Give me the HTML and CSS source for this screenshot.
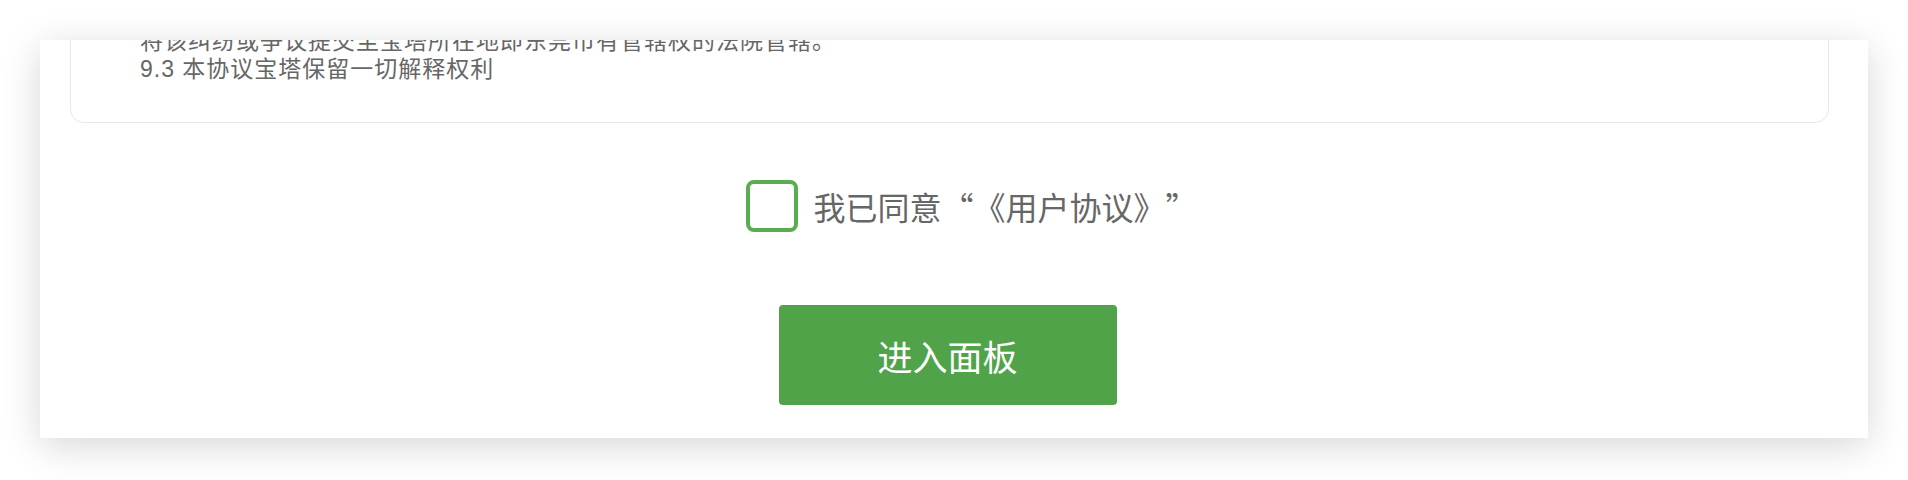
FILE: index.html
```html
<!DOCTYPE html>
<html lang="zh-CN">
<head>
<meta charset="utf-8">
<title>用户协议</title>
<link rel="stylesheet" href="styles.css">
</head>
<body>
<div class="panel">
  <div class="agreement">
    <p class="line">将该纠纷或争议提交至宝塔所在地即东莞市有管辖权的法院管辖。</p>
    <p class="line">9.3 本协议宝塔保留一切解释权利</p>
  </div>
  <label class="agree">
    <span class="check"></span>
    <span class="agree-text">我已同意<span class="q q-open">“</span>《用户协议》<span class="q q-close">”</span></span>
  </label>
  <div class="actions">
    <button class="enter-btn" type="button">进入面板</button>
  </div>
</div>
</body>
</html>
```

FILE: styles.css
```css
html, body {
  margin: 0;
  padding: 0;
  background: #ffffff;
}
body {
  font-family: "Liberation Sans", "Noto Sans CJK SC", sans-serif;
  padding: 40px;
  height: 480px;
  box-sizing: border-box;
}
.panel {
  height: 398px;
  background: #ffffff;
  box-shadow: 0 8px 36px rgba(0, 0, 0, 0.16);
  overflow: hidden;
  padding: 0 39px 0 30px;
  display: flex;
  flex-direction: column;
  align-items: center;
}
.agreement {
  align-self: stretch;
  margin-top: -34px;
  padding: 20px 40px 39px 69px;
  border: 1px solid #e8e8e8;
  border-radius: 14px;
  color: #666666;
  font-size: 23px;
  letter-spacing: 1px;
  line-height: 28px;
}
.line {
  margin: 0;
  white-space: nowrap;
}
.agree {
  margin-top: 57px;
  margin-left: 45px;
  display: flex;
  align-items: center;
  gap: 15px;
  cursor: pointer;
}
.check {
  width: 52px;
  height: 52px;
  box-sizing: border-box;
  border: 4px solid #58ad50;
  border-radius: 8px;
  background: #ffffff;
}
.agree-text {
  font-size: 32px;
  line-height: 40px;
  color: #666666;
  font-family: "Noto Sans CJK SC", sans-serif;
  white-space: nowrap;
}
.q {
  display: inline-block;
  width: 1em;
}
.q-open {
  text-align: left;
}
.q-close {
  text-align: right;
}
.actions {
  margin-top: 73px;
  margin-right: 4px;
}
.enter-btn {
  width: 338px;
  height: 100px;
  border: 0;
  border-radius: 4px;
  background: #51a34a;
  color: #ffffff;
  font-family: "Noto Sans CJK SC", sans-serif;
  font-size: 35px;
  cursor: pointer;
}
```
